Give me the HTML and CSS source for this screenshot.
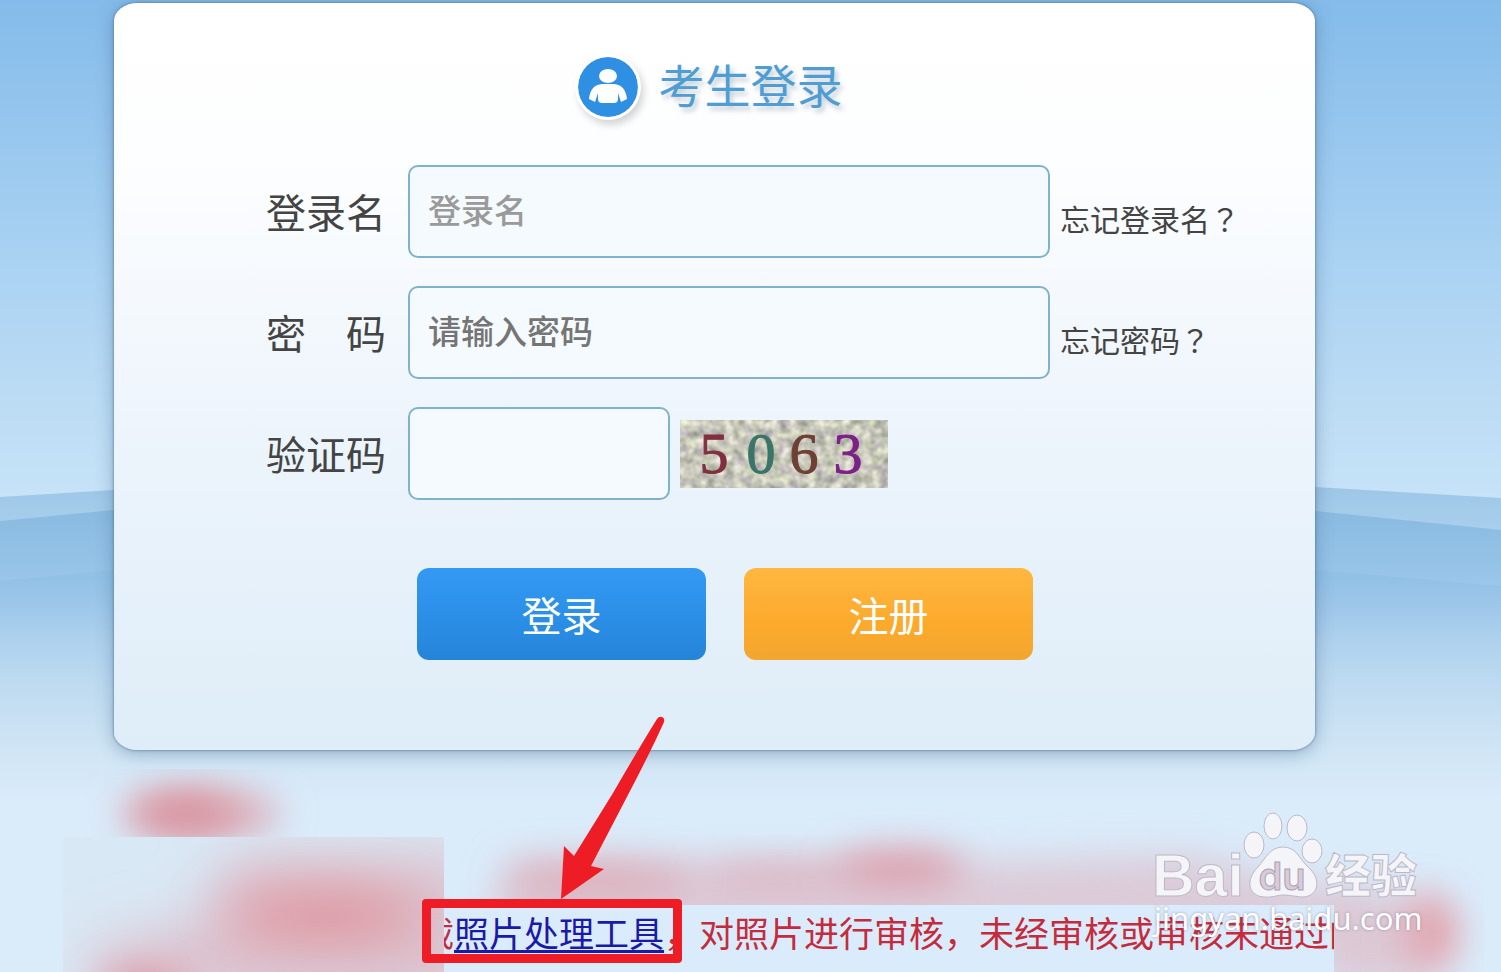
FILE: index.html
```
<!DOCTYPE html>
<html lang="zh-CN">
	<head>
		<meta charset="utf-8" />
		<meta name="viewport" content="width=device-width, initial-scale=1.0" />
		<title>考生登录</title>
		<link rel="stylesheet" href="styles.css">
	</head>
	<body>
		<svg class="scenery" viewBox="0 0 1501 972" preserveAspectRatio="none" aria-hidden="true">
			<defs>
				<linearGradient id="sky" x1="0" y1="0" x2="0" y2="500" gradientUnits="userSpaceOnUse">
					<stop offset="0" stop-color="#84bbea" />
					<stop offset="0.5" stop-color="#a8d1f2" />
					<stop offset="0.8" stop-color="#bcdcf4" />
					<stop offset="1" stop-color="#c6e3f8" />
				</linearGradient>
				<linearGradient id="ridge" x1="0" y1="485" x2="0" y2="535" gradientUnits="userSpaceOnUse">
					<stop offset="0" stop-color="#9dc6e6" />
					<stop offset="1" stop-color="#a9d0ee" />
				</linearGradient>
				<linearGradient id="hill" x1="0" y1="505" x2="0" y2="800" gradientUnits="userSpaceOnUse">
					<stop offset="0" stop-color="#89b9e0" />
					<stop offset="0.25" stop-color="#98c5e9" />
					<stop offset="0.6" stop-color="#bddaf0" />
					<stop offset="0.8" stop-color="#cee4f4" />
					<stop offset="1" stop-color="#daebfa" />
				</linearGradient>
				<linearGradient id="slope" x1="0" y1="570" x2="0" y2="640" gradientUnits="userSpaceOnUse">
					<stop offset="0" stop-color="#86b8e0" stop-opacity="0.35" />
					<stop offset="1" stop-color="#86b8e0" stop-opacity="0" />
				</linearGradient>
			</defs>
			<rect width="1501" height="500" fill="url(#sky)" />
			<path d="M0 497L114 490Q714 450 1315 487L1501 498V560H0z" fill="url(#ridge)" />
			<path d="M0 521L114 510Q714 470 1315 511L1501 530V972H0z" fill="url(#hill)" />
			<path d="M0 581L114 570H1315L1501 586V640H0z" fill="url(#slope)" />
		</svg>

		<main class="login">
			<h1 class="login-title">
				<svg class="avatar" viewBox="0 0 60 60" aria-hidden="true">
					<circle cx="30" cy="30" r="30" fill="#2f8fe3" />
					<ellipse cx="30" cy="19" rx="9" ry="7" fill="#fff" />
					<path d="M11 42C12 32 17 27 25 27H35C43 27 48 32 49 42L43 45L40 36V42Q40 46 36 46H24Q20 46 20 42V36L17 45z" fill="#fff" />
				</svg>
				<span>考生登录</span>
			</h1>

			<form class="login-form">
				<div class="row">
					<label for="username">登录名</label>
					<input type="text" id="username" placeholder="登录名" />
					<a class="forgot" href="#">忘记登录名<span class="mark" lang="zh-TW">？</span></a>
				</div>
				<div class="row">
					<label for="password">密　码</label>
					<input type="password" id="password" class="password" placeholder="请输入密码" />
					<a class="forgot" href="#">忘记密码<span class="mark" lang="zh-TW">？</span></a>
				</div>
				<div class="row">
					<label for="code">验证码</label>
					<div class="code">
						<input type="text" id="code" />
						<svg class="captcha" viewBox="0 0 208 68" role="img" aria-label="验证码图片">
							<filter id="speckle" x="0" y="0" width="100%" height="100%" color-interpolation-filters="sRGB">
								<feTurbulence type="fractalNoise" baseFrequency="0.11" numOctaves="2" seed="5" />
								<feColorMatrix values="0.5 0.1 0 0 0.48  0.5 0 0 0 0.53  0.4 0.2 0 0 0.43  0 0 0 0 1" />
							</filter>
							<rect width="208" height="68" filter="url(#speckle)" />
							<g class="digits">
								<text x="34" y="53" class="digit-red">5</text>
								<text x="81" y="53" class="digit-green">0</text>
								<text x="124" y="53" class="digit-brown">6</text>
								<text x="168" y="53" class="digit-purple">3</text>
							</g>
						</svg>
					</div>
				</div>
				<div class="actions">
					<button type="submit" class="btn btn-login">登录</button>
					<button type="button" class="btn btn-register">注册</button>
				</div>
			</form>
		</main>

		<section class="notice">
			<svg class="smudges" viewBox="0 0 1501 222" preserveAspectRatio="none" aria-hidden="true">
				<defs>
					<filter id="soft" x="-50%" y="-150%" width="200%" height="400%">
						<feGaussianBlur stdDeviation="28" />
					</filter>
					<filter id="softer" x="-50%" y="-150%" width="200%" height="400%">
						<feGaussianBlur stdDeviation="18" />
					</filter>
					<clipPath id="top"><rect x="85" y="19" width="400" height="68" /></clipPath>
					<clipPath id="left"><rect x="63" y="87" width="381" height="135" /></clipPath>
					<clipPath id="right"><rect x="444" y="40" width="1057" height="182" /></clipPath>
				</defs>
				<g clip-path="url(#top)">
					<ellipse cx="200" cy="64" rx="80" ry="25" fill="#dbaab5" filter="url(#softer)" />
					<ellipse cx="185" cy="64" rx="48" ry="18" fill="#d8909b" filter="url(#softer)" />
				</g>
				<g clip-path="url(#left)">
					<rect x="63" y="87" width="381" height="135" fill="#d9d4e0" opacity="0.15" />
					<path d="M230 105H480V260H90V200L200 170z" fill="#dcc3cf" filter="url(#soft)" />
					<ellipse cx="325" cy="165" rx="100" ry="20" fill="#e0868e" filter="url(#soft)" />
					<ellipse cx="145" cy="235" rx="45" ry="14" fill="#de8f9b" filter="url(#softer)" />
				</g>
				<g clip-path="url(#right)">
					<path d="M510 112H970L1190 105L1370 150V190H480z" fill="#dccbd8" filter="url(#softer)" />
					<ellipse cx="600" cy="130" rx="95" ry="16" fill="#dcaab6" filter="url(#softer)" />
					<ellipse cx="780" cy="125" rx="80" ry="10" fill="#dcaab6" filter="url(#softer)" />
					<ellipse cx="900" cy="118" rx="65" ry="18" fill="#dc9ba7" filter="url(#softer)" />
					<rect x="1320" y="145" width="110" height="90" fill="#dcc8d4" filter="url(#softer)" />
					<ellipse cx="1432" cy="183" rx="26" ry="38" fill="#e2a2ab" filter="url(#softer)" />
				</g>
			</svg>
			<p class="notice-text">载<a href="#">照片处理工具</a>，对照片进行审核，未经审核或审核未通过的</p>

			<div class="marker"></div>
			<svg class="arrow" viewBox="0 0 110 190" aria-hidden="true">
				<path d="M109 6Q110 2 107 1Q104 0 102 3Q84 32 58 77L19 140L9 130L6 183L49 153L36 150L75 75Q96 35 109 6z" fill="#ee1c25" />
			</svg>
			<svg class="watermark" viewBox="0 0 280 140" role="img" aria-label="Baidu 经验">
				<g class="logo">
					<text x="0" y="96" class="bai">Bai</text>
					<ellipse cx="102" cy="45" rx="10" ry="13" />
					<ellipse cx="121" cy="26" rx="9" ry="13" />
					<ellipse cx="145" cy="28" rx="10" ry="13" />
					<ellipse cx="160" cy="51" rx="10" ry="12" />
					<path d="M131 47C144 47 147 58 155 66C172 80 165 98 149 97C141 96 137 95 131 95C125 95 120 98 112 97C96 96 93 80 106 67C114 58 118 47 131 47z" />
					<text x="173" y="92" class="jingyan">经验</text>
				</g>
				<text x="130" y="90" class="du">du</text>
				<text x="2" y="130" class="site">jingyan.baidu.com</text>
			</svg>
		</section>
	</body>
</html>
```
FILE: styles.css
```
* {
	box-sizing: border-box;
}

body {
	position: relative;
	display: flex;
	flex-direction: column;
	min-height: 100vh;
	margin: 0;
	padding-top: 3px;
	overflow-x: hidden;
	background: #daebfa;
	color: #444;
	font-family: 'Liberation Sans', 'Noto Sans CJK SC', sans-serif;
	font-size: 40px;
	line-height: 48px;
}

.scenery {
	position: absolute;
	top: 0;
	left: 0;
	z-index: -1;
	width: 100%;
	height: 100%;
}

.login {
	width: 80%;
	margin-left: 114px;
	padding: 48px 0 90px;
	border-radius: 24px / 18px;
	background: linear-gradient(#fff, #fdfeff 20%, #eef5fc 55%, #deedf8);
	box-shadow: 0 0 3px #53738f, 0 3px 18px rgba(60, 100, 140, 0.45);
}

.login-title {
	display: flex;
	align-items: center;
	justify-content: center;
	gap: 20px;
	height: 72px;
	margin: 0 0 42px;
	padding-right: 8px;
	color: #4e9dd3;
	font-size: 46px;
	font-weight: 400;
	text-shadow: 3px 4px 5px rgba(90, 110, 130, 0.35);
}

.avatar {
	width: 60px;
	height: 60px;
	border-radius: 50%;
	box-shadow: 0 0 0 3px #fff, 3px 5px 7px 3px rgba(90, 90, 90, 0.25);
}

.login-form {
	display: flex;
	flex-direction: column;
	gap: 28px;
	padding-left: 152px;
}

.row {
	display: grid;
	grid-template-columns: 120px minmax(0, 642px) auto;
	align-items: center;
	justify-content: start;
	column-gap: 22px;
}

.row label {
	padding-top: 4px;
	white-space: nowrap;
}

.row input {
	width: 100%;
	height: 93px;
	padding: 0 18px;
	border: 2px solid #7fb3cb;
	border-radius: 10px;
	background: #f5fafe;
	color: #555;
	font-family: inherit;
	font-size: 33px;
	outline: none;
}

.row input:focus {
	border-color: #2f8fe3;
}

.row input::placeholder {
	color: #9a9a9a;
	font-weight: 500;
	opacity: 1;
}

.row .password::placeholder {
	color: #757575;
}

.forgot {
	margin-left: -12px;
	padding-top: 16px;
	color: #444;
	font-size: 30px;
	text-decoration: none;
	white-space: nowrap;
}

.forgot:hover {
	text-decoration: underline;
}

/* the TC face centres the full-width question mark */
.mark {
	font-family: 'Noto Sans CJK TC', sans-serif;
}

.code {
	display: flex;
	align-items: center;
	gap: 10px;
}

.code input {
	width: 262px;
}

.captcha {
	width: 208px;
	height: 68px;
}

.digits {
	font-family: 'Liberation Serif', serif;
	font-size: 58px;
	stroke-width: 1px;
	text-anchor: middle;
}

.digit-red {
	fill: #80303f;
	stroke: #80303f;
}

.digit-green {
	fill: #3b7468;
	stroke: #3b7468;
}

.digit-brown {
	fill: #6e4035;
	stroke: #6e4035;
}

.digit-purple {
	fill: #7c2186;
	stroke: #7c2186;
}

.actions {
	display: flex;
	gap: 38px;
	padding: 40px 0 0 151px;
}

.btn {
	width: 289px;
	height: 92px;
	border: none;
	border-radius: 12px;
	color: #fff;
	font-family: inherit;
	font-size: 40px;
	cursor: pointer;
}

.btn-login {
	background: linear-gradient(#3399f3, #2c90e8 50%, #2484d8);
}

.btn-register {
	background: linear-gradient(#ffb741, #fcaa2c 60%, #f2a62f);
}

.notice {
	position: relative;
	flex: 1;
	min-height: 222px;
	padding-top: 155px;
}

.smudges {
	position: absolute;
	top: 0;
	left: 0;
	width: 100%;
	height: 222px;
}

.notice-text {
	position: relative;
	height: 67px;
	margin: 0 167px 0 444px;
	padding-top: 6px;
	overflow: hidden;
	background: #daecfb;
	color: #c42c3e;
	font-size: 35px;
	line-height: 48px;
	text-indent: -25px;
	white-space: nowrap;
}

.notice-text a {
	color: #1a1aa6;
	text-decoration-thickness: 3px;
	text-underline-offset: 3px;
}

.marker {
	position: absolute;
	top: 149px;
	left: 422px;
	width: 260px;
	height: 64px;
	border: 9px solid #ee1c25;
	border-radius: 4px;
}

.arrow {
	position: absolute;
	top: -34px;
	left: 555px;
	width: 110px;
	height: 190px;
}

.watermark {
	position: absolute;
	top: 50px;
	left: 1152px;
	width: 280px;
	height: 140px;
	fill: #f4f4f9;
}

.logo {
	stroke: #bcb9c6;
	stroke-width: 1px;
}

.bai {
	font-family: 'Liberation Sans', sans-serif;
	font-size: 59px;
	font-weight: 700;
}

.jingyan {
	font-family: 'Noto Sans CJK SC', sans-serif;
	font-size: 46px;
	font-weight: 900;
}

.du {
	fill: #d9cbd7;
	stroke: #aaa4b5;
	font-family: 'Inter', sans-serif;
	font-size: 38px;
	font-weight: 600;
	text-anchor: middle;
}

.site {
	fill: #fff;
	font-family: 'Noto Sans', sans-serif;
	font-size: 31px;
	text-shadow: 0 0 3px rgba(110, 100, 130, 0.6);
}
```
